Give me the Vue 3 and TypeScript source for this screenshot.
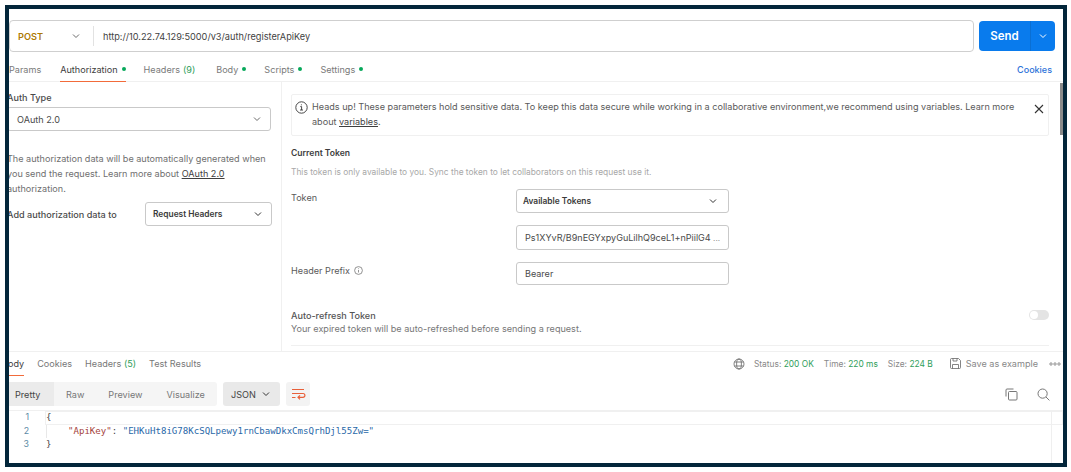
<script setup lang="ts">
const tabs = [
  { label: 'Params', dot: false, active: false },
  { label: 'Authorization', dot: true, active: true },
  { label: 'Headers', count: '(9)', dot: false, active: false },
  { label: 'Body', dot: true, active: false },
  { label: 'Scripts', dot: true, active: false },
  { label: 'Settings', dot: true, active: false },
]
const views = ['Pretty', 'Raw', 'Preview', 'Visualize']
</script>

<template>
  <div class="page">
    <div class="frame">
      <div class="url-row">
        <div class="url-box">
          <div class="method"><span class="post">POST</span>
            <svg class="chev" width="10" height="10" viewBox="0 0 10 10"><path d="M2 3.5 5 6.5 8 3.5" /></svg>
          </div>
          <div class="url">http://10.22.74.129:5000/v3/auth/registerApiKey</div>
        </div>
        <div class="send">
          <span class="send-label">Send</span>
          <span class="send-more"><svg class="chev white" width="10" height="10" viewBox="0 0 10 10"><path d="M2 3.5 5 6.5 8 3.5" /></svg></span>
        </div>
      </div>

      <div class="tabs">
        <div v-for="t in tabs" :key="t.label" class="tab" :class="{ active: t.active }">
          <span>{{ t.label }}</span><span v-if="t.count" class="count tab-count">{{ t.count }}</span><i v-if="t.dot" class="dot"></i>
        </div>
        <a class="cookies">Cookies</a>
      </div>

      <div class="main">
        <div class="left">
          <div class="label strong first">Auth Type</div>
          <div class="select oauth"><span>OAuth 2.0</span>
            <svg class="chev" width="10" height="10" viewBox="0 0 10 10"><path d="M2 3.5 5 6.5 8 3.5" /></svg>
          </div>
          <p class="help">The authorization data will be automatically generated when you send the request. Learn more about <u>OAuth 2.0</u> authorization.</p>
          <div class="add-row">
            <span class="label strong">Add authorization data to</span>
            <div class="select small"><b>Request Headers</b>
              <svg class="chev dark" width="10" height="10" viewBox="0 0 10 10"><path d="M2 3.5 5 6.5 8 3.5" /></svg>
            </div>
          </div>
        </div>

        <div class="right">
          <div class="alert">
            <svg class="info" width="13" height="13" viewBox="0 0 13 13"><circle cx="6.5" cy="6.5" r="5.7" /><path d="M5.3 5.6h1.3v3.4M5 9h3M6.4 3.4v.9" /></svg>
            <p>Heads up! These parameters hold sensitive data. To keep this data secure while working in a collaborative environment,we recommend using variables. Learn more about <u>variables</u>.</p>
            <svg class="close" width="10" height="10" viewBox="0 0 10 10"><path d="M1 1 9 9M9 1 1 9" /></svg>
          </div>
          <div class="section-title">Current Token</div>
          <div class="hint">This token is only available to you. Sync the token to let collaborators on this request use it.</div>

          <div class="form-row token">
            <span class="form-label">Token</span>
            <div class="select field"><b>Available Tokens</b>
              <svg class="chev dark" width="10" height="10" viewBox="0 0 10 10"><path d="M2 3.5 5 6.5 8 3.5" /></svg>
            </div>
          </div>
          <div class="form-row tokenval">
            <span class="form-label"></span>
            <div class="input field tall"><span>Ps1XYvR/B9nEGYxpyGuLilhQ9ceL1+nPiilG4</span><span class="dots">...</span></div>
          </div>
          <div class="form-row prefix">
            <span class="form-label">Header Prefix
              <svg class="mini" width="9" height="9" viewBox="0 0 9 9"><circle cx="4.5" cy="4.5" r="3.9" /><path d="M4.5 4v2.5M4.5 2.4v.7" /></svg>
            </span>
            <div class="input field"><span>Bearer</span></div>
          </div>

          <div class="refresh">
            <div>
              <div class="refresh-title">Auto-refresh Token</div>
              <div class="refresh-desc">Your expired token will be auto-refreshed before sending a request.</div>
            </div>
            <span class="toggle"><i></i></span>
          </div>
          <div class="rule"></div>
        </div>
        <div class="scrollbar"></div>
      </div>

      <div class="res-tabs">
        <div class="res-tab active">Body</div>
        <div class="res-tab">Cookies</div>
        <div class="res-tab">Headers <span class="count">(5)</span></div>
        <div class="res-tab">Test Results</div>
        <div class="meta">
          <svg class="globe" width="12" height="12" viewBox="0 0 12 12"><circle cx="6" cy="6" r="5" /><ellipse cx="6" cy="6" rx="2.4" ry="5" /><path d="M1.4 4h9.2M1.4 8h9.2" /></svg>
          <span class="stat">Status: <em>200 OK</em></span>
          <span class="stat">Time: <em>220 ms</em></span>
          <span class="stat">Size: <em>224 B</em></span>
          <svg class="save" width="13" height="13" viewBox="0 0 13 13"><path d="M1.5 2.5a1 1 0 0 1 1-1h7l2 2v7a1 1 0 0 1-1 1h-8a1 1 0 0 1-1-1zM4 1.5v2.5h4V1.5M3.5 11.5V7.5h6v4" /></svg>
          <span class="save-label">Save as example</span>
          <svg class="more" width="12" height="4" viewBox="0 0 12 4"><circle cx="2" cy="2" r="1.2" /><circle cx="6" cy="2" r="1.2" /><circle cx="10" cy="2" r="1.2" /></svg>
        </div>
      </div>

      <div class="toolbar">
        <div class="views">
          <span v-for="(v, i) in views" :key="v" class="view" :class="{ on: i === 0 }">{{ v }}</span>
        </div>
        <div class="json">JSON
          <svg class="chev dark" width="10" height="10" viewBox="0 0 10 10"><path d="M2 3.5 5 6.5 8 3.5" /></svg>
        </div>
        <div class="wrap">
          <svg width="16" height="14" viewBox="0 0 16 14"><path d="M2 2.5h12M2 6.5h11a1.8 1.8 0 0 1 0 3.8H8M10 8.4 8 10.3l2 2M2 10.5h3.5" /></svg>
        </div>
        <div class="tools">
          <svg class="copy" width="13" height="13" viewBox="0 0 13 13"><path d="M1 8.5V2a1 1 0 0 1 1-1h6.5" /><rect x="3.5" y="3.5" width="8.5" height="8.5" rx="1" /></svg>
          <svg class="search" width="13" height="13" viewBox="0 0 13 13"><circle cx="5.6" cy="5.6" r="4.6" /><path d="M9 9l3.4 3.4" /></svg>
        </div>
      </div>

      <div class="code">
        <div class="line current"><span class="ln">1</span><span class="brace">{</span></div>
        <div class="line"><span class="ln">2</span><span class="pad"><span class="key">"ApiKey"</span>: <span class="str">"EHKuHt8iG78KcSQLpewy1rnCbawDkxCmsQrhDjl55Zw="</span></span></div>
        <div class="line"><span class="ln">3</span><span class="brace">}</span></div>
        <div class="minimap"></div>
      </div>
    </div>
  </div>
</template>

<style scoped>
.page {
  width: 1071px;
  height: 472px;
  padding: 5px 4px 5px 5px;
  box-sizing: border-box;
  background: #fff;
  font-family: Inter, "Liberation Sans", sans-serif;
  font-size: 9.1px;
  color: #5f5f5f;
}
.frame {
  position: relative;
  height: 100%;
  box-sizing: border-box;
  border: 4px solid #03263a;
  background: #fff;
  overflow: hidden;
  display: flex;
  flex-direction: column;
}
.chev { fill: none; stroke: #6b6b6b; stroke-width: 1; flex: none; }
.chev.white { stroke: #fff; }
.chev.dark { stroke: #333; }

.url-row { display: flex; gap: 5px; padding: 11px 8px 0 0; height: 43px; box-sizing: border-box; }
.url-box {
  flex: 1; display: flex; align-items: center; height: 32px; box-sizing: border-box;
  border: 1px solid #cfcfcf; border-radius: 4px;
}
.method {
  width: 84px; height: 20px; box-sizing: border-box; display: flex; align-items: center; justify-content: space-between;
  padding: 0 12px 0 8px; border-right: 1px solid #e2e2e2;
}
.post { color: #ad7a03; font-weight: 600; font-size: 9.2px; }
.url { padding-left: 9px; color: #3f3f3f; font-size: 9.18px; }
.send {
  width: 76px; height: 30px; margin-top: 1px; background: #097bed; border-radius: 4px; color: #fff;
  display: flex; align-items: center; font-size: 11.5px; font-weight: 600;
}
.send-label { width: 51px; text-align: center; height: 100%; line-height: 30px; border-right: 1px solid #0a6fd3; }
.send-more { flex: 1; display: flex; justify-content: center; }

.tabs {
  height: 30px; box-sizing: border-box; display: flex; align-items: stretch; gap: 19px; border-bottom: 1px solid #f0f0f0;
  padding: 6px 11px 0 0;
}
.tab { color: #7a7a7a; display: flex; align-items: center; position: relative; padding-bottom: 1px; }
.tab:nth-child(3) { margin: 0 2px 0 -1px; }
.tab:nth-child(5), .tab:nth-child(6) { margin-left: -1px; }
.tab.active { color: #3d3d3d; }
.tab.active::after { content: ""; position: absolute; left: 0; right: 0; bottom: -1px; height: 1px; background: #f26b3a; }
.tab-count { margin-left: 3px; }
.count { color: #2f9e5a; }
.dot { width: 4px; height: 4px; border-radius: 50%; background: #06a85a; margin-left: 4px; display: inline-block; }
.cookies { margin-left: auto; align-self: center; color: #2d72d9; font-weight: 500; font-size: 9px; }

.main { position: relative; height: 270px; display: flex; border-bottom: 1px solid #f0f0f0; box-sizing: border-box; }
.left { width: 274px; flex: none; border-right: 1px solid #f0f0f0; margin-left: -2px; }
.label.strong { font-weight: 500; color: #4a4a4a; }
.first { margin-top: 10px; line-height: 12px; }
.select {
  display: flex; align-items: center; justify-content: space-between; box-sizing: border-box;
  border: 1px solid #c9c9c9; border-radius: 3px; background: #fff;
}
.oauth { width: 264px; height: 24px; margin-top: 3px; padding: 0 8px 0 9px; color: #4a4a4a; }
.help { margin: 20px 0 0; line-height: 15px; color: #6f6f6f; width: 266px; }
.help u, .alert u { color: #3f3f3f; }
.add-row { display: flex; align-items: center; justify-content: space-between; margin-top: 6px; width: 265px; }
.select.small { width: 127px; height: 24px; padding: 0 8px 0 7px; font-size: 8.4px; }
.select b, .field b { font-weight: 600; color: #3a3a3a; }

.right { flex: 1; padding: 12px 14px 0 9px; min-width: 0; }
.alert {
  height: 42px; box-sizing: border-box; border: 1px solid #f0f0f0; border-radius: 2px; display: flex; padding: 0 5px 0 3px; align-items: flex-start; position: relative;
}
.alert p { margin: 4px 0 0 4px; line-height: 15px; width: 712px; color: #5a5a5a; }
.info { fill: none; stroke: #333; stroke-width: 0.9; flex: none; margin-top: 6px; }
.close { fill: none; stroke: #333; stroke-width: 1.1; position: absolute; right: 4px; top: 9px; }
.section-title { margin-top: 12px; font-size: 8.6px; font-weight: 600; color: #3d3d3d; line-height: 11px; }
.hint { margin-top: 8px; font-size: 8.4px; color: #a8a8a8; line-height: 11px; }
.form-row { display: flex; position: relative; }
.form-label { width: 225px; flex: none; color: #5a5a5a; }
.token { margin-top: 11px; }
.token .form-label { padding-top: 3px; }
.tokenval { margin-top: 12px; }
.prefix { margin-top: 12px; }
.prefix .form-label { padding-top: 3px; }
.field { width: 213px; }
.select.field { height: 24px; padding: 0 10px 0 6px; font-size: 8.4px; }
.input { box-sizing: border-box; border: 1px solid #c9c9c9; border-radius: 3px; height: 23px; display: flex; align-items: center; padding: 0 8px; color: #4a4a4a; font-size: 9.05px; justify-content: space-between; }
.input.tall { height: 25px; }
.dots { color: #888; font-size: 8px; }
.mini { fill: none; stroke: #777; stroke-width: 0.8; vertical-align: -1px; margin-left: 1px; }
.refresh { display: flex; justify-content: space-between; margin-top: 25px; }
.refresh-title { font-weight: 500; color: #555; line-height: 12px; }
.refresh-desc { color: #777; line-height: 12px; margin-top: 1px; }
.toggle { width: 20px; height: 10px; border-radius: 5px; background: #e4e4e4; position: relative; }
.toggle i { position: absolute; left: 1px; top: 1px; width: 8px; height: 8px; border-radius: 50%; background: #fff; }
.rule { height: 1px; background: #f0f0f0; margin-top: 10px; }
.scrollbar { position: absolute; right: 0; top: 1px; width: 3px; height: 52px; background: #8a8a8a; }

.res-tabs { height: 23px; display: flex; align-items: center; padding-right: 2px; margin-left: -7px; }
.res-tab { margin-right: 13px; color: #777; line-height: 22px; position: relative; }
.res-tab.active { color: #3d3d3d; }
.res-tab.active::after { content: ""; position: absolute; left: 0; right: 0; bottom: -1px; height: 1px; background: #f26b3a; }
.meta { margin-left: auto; display: flex; align-items: center; color: #888; font-size: 8.4px; }
.meta em { font-style: normal; color: #2f9e5a; }
.globe, .save { fill: none; stroke: #666; stroke-width: 0.8; }
.globe { margin-right: 9px; }
.stat { margin-right: 10px; }
.save { margin-left: 6px; margin-right: 4px; }
.save-label { font-size: 9.1px; margin-right: 11px; }
.more { fill: none; stroke: #666; stroke-width: 0.7; }

.toolbar { display: flex; align-items: flex-start; height: 29px; margin-top: 7px; box-sizing: border-box; border-bottom: 1px solid #f0f0f0; }
.views { display: flex; height: 24px; background: #f5f5f5; border-radius: 0 3px 3px 0; width: 208px; align-items: stretch; }
.view { display: flex; align-items: center; color: #777; padding: 0 0 0 12px; margin-right: 12px; }
.view.on { background: #ebebeb; color: #444; padding: 0 12px 0 6px; margin-right: 0; width: 27px; }
.json { width: 57px; height: 24px; box-sizing: border-box; margin-left: 6px; background: #e9e9e9; border-radius: 3px; display: flex; align-items: center; justify-content: space-between; padding: 0 9px 0 8px; color: #444; }
.wrap { width: 24px; height: 24px; margin-left: 6px; background: #f3f3f3; border-radius: 3px; display: flex; align-items: center; justify-content: center; }
.wrap svg { fill: none; stroke: #e8603a; stroke-width: 1.2; }
.tools { margin-left: auto; display: flex; gap: 19px; padding: 6px 13px 0 0; }
.tools svg { fill: none; stroke: #777; stroke-width: 1; }

.code { position: relative; flex: 1; font-family: "DejaVu Sans Mono", "Liberation Mono", monospace; font-size: 9.08px; }
.line { display: flex; height: 13.5px; align-items: flex-start; line-height: 12px; }
.line.current { box-shadow: inset 0 0 0 1px #f0f0f0; margin-left: 36px; }
.line.current .ln { margin-left: -36px; }
.ln { width: 20px; text-align: right; color: #5b8aa5; margin-right: 17px; flex: none; font-family: Inter, sans-serif; font-size: 8.8px; }
.brace { color: #444; }
.pad { padding-left: 21px; color: #444; border-left: 1px solid #e8e8e8; height: 100%; white-space: pre; }
.key { color: #a5433c; }
.str { color: #2a68a8; }
.minimap { position: absolute; right: 11px; top: 0; bottom: 0; width: 1px; background: #efefef; }
</style>

<style>
html, body { margin: 0; padding: 0; background: #fff; }
</style>
